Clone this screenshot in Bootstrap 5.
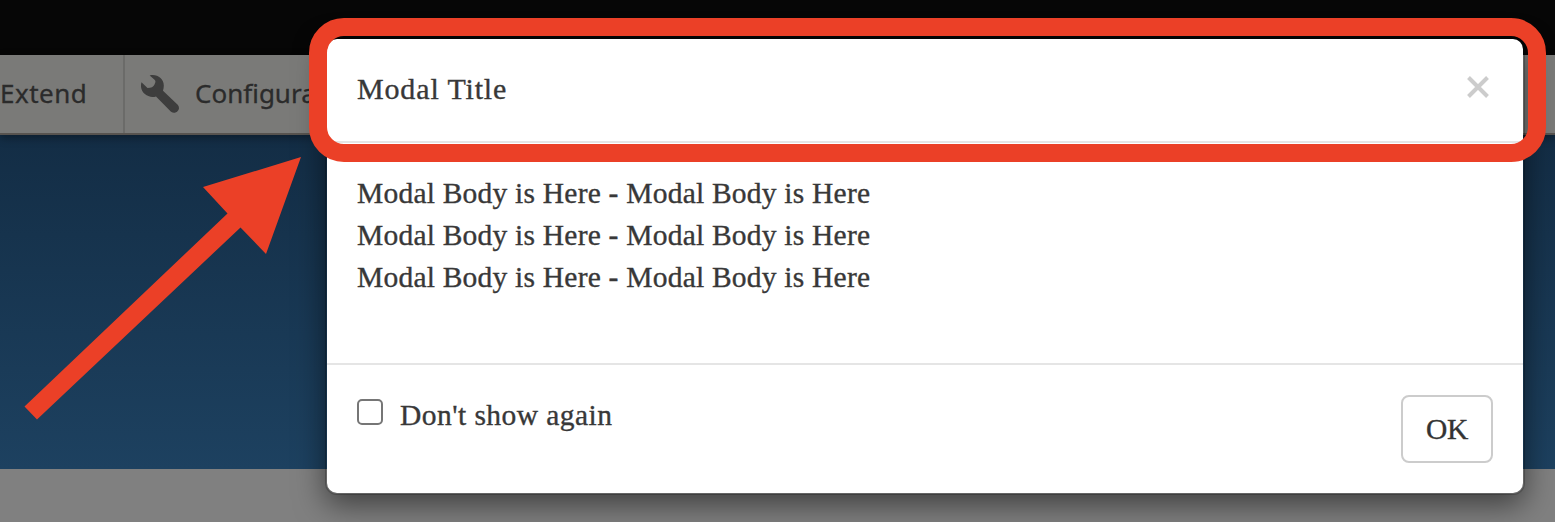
<!DOCTYPE html>
<html lang="en">
<head>
<meta charset="utf-8">
<meta name="viewport" content="width=device-width, initial-scale=1">
<title>Modal Title</title>
<link href="https://cdn.jsdelivr.net/npm/bootstrap@5.3.0/dist/css/bootstrap.min.css" rel="stylesheet">
<style>
  body { height: 522px; background: #808080; }
  .topbar { height: 55px; background: #060606; }
  .tray { height: 80px; background: #7a7a78; border-bottom: 2px solid #57534f; font: 26px/38px "Noto Sans", sans-serif; color: #2b2b2b; -webkit-text-stroke: .3px #2b2b2b; box-shadow: 0 3px 8px rgba(0,0,0,.35); z-index: 1; }
  .tray-item { border-right: 2px solid #6b6b69; width: 125px; letter-spacing: .5px; }
  .tray span, .tray-item { padding-bottom: 3px; }
  .hero { height: 334px; background: linear-gradient(#132d45, #1d4160); }
  .dialog-wrap { padding: 37px 30px 0 325px; z-index: 5; }
  .modal-content { height: 458px; background-color: #fff; border: 2px solid rgba(0,0,0,.2); border-radius: 12px; background-clip: padding-box; box-shadow: 0 10px 30px rgba(0,0,0,.5); font: 29.5px/42px "Liberation Serif", serif; color: #383838; -webkit-text-stroke: .35px #383838; letter-spacing: .22px; }
  .modal-header { height: 104px; padding: 0 30px; border-bottom: 2px solid #e5e5e5; }
  .modal-title { font: inherit; font-size: 30px; letter-spacing: .85px; margin-top: -2px; }
  .modal-body { padding: 29px 30px; }
  .modal-footer { height: 130px; padding: 30px; border-top: 2px solid #e5e5e5; }
  .form-check-input[type=checkbox] { width: 26px; height: 26px; margin: 4px 17px 0 0; border: 2px solid #767676; border-radius: 5px; }
  .again { letter-spacing: .45px; margin-top: -1px; }
  .btn-ok { width: 92px; height: 68px; border: 2px solid #ccc; border-radius: 8px; font: inherit; color: #333; letter-spacing: -.4px; }
  .close-x { width: 22px; height: 22px; margin: -7px 4px 0 0; }
  .ring { left: 309px; top: 18px; width: 1237px; height: 144px; border: 18.5px solid #eb4027; border-radius: 35px; z-index: 7; }
  .arrow { z-index: 6; }
</style>
</head>
<body class="position-relative overflow-hidden">
  <div class="topbar"></div>
  <nav class="tray d-flex position-relative">
    <div class="tray-item d-flex align-items-center">Extend</div>
    <div class="d-flex align-items-center">
      <svg class="ms-3" width="38" height="38" viewBox="0 0 38 38" aria-hidden="true"><path d="M8.700.4C16-1.300 22.800 3.500 22.800 10.500Q22.800 13 22 15.700L36.700 29.800C40.500 34 35 40 30 36.700L15 21.400C7 24-2.500 17 .5 7.300L6.500 13Q12 13 13.500 9.500Q15.500 6 13.300 4.500Z" fill="#3d3d3d"/></svg>
      <span class="ms-3">Configuration</span>
    </div>
  </nav>
  <main class="hero"></main>

  <div class="dialog-wrap position-absolute top-0 start-0 w-100" role="dialog">
    <div class="modal-content">
      <div class="modal-header d-flex align-items-center justify-content-between">
        <h1 class="modal-title">Modal Title</h1>
        <svg class="close-x" viewBox="0 0 22 22" role="button" aria-label="Close"><path d="M1.500 1.500 20.500 20.500M20.500 1.500 1.500 20.500" stroke="#ccc" stroke-width="4"/></svg>
      </div>
      <div class="modal-body">Modal Body is Here - Modal Body is Here<br>Modal Body is Here - Modal Body is Here<br>Modal Body is Here - Modal Body is Here</div>
      <div class="modal-footer d-flex align-items-start justify-content-between">
        <label class="d-flex align-items-start m-0"><input class="form-check-input" type="checkbox"><span class="again">Don't show again</span></label>
        <button class="btn btn-ok p-0 m-0" type="button">OK</button>
      </div>
    </div>
  </div>

  <svg class="arrow position-absolute top-0 start-0" width="310" height="430" aria-hidden="true"><path d="M301 157 203 187 227.500 213.500 24.500 406.500 37 419.500 240.500 227.500 266 254Z" fill="#eb4027"/></svg>
  <div class="ring position-absolute"></div>
<script src="https://cdn.jsdelivr.net/npm/bootstrap@5.3.0/dist/js/bootstrap.bundle.min.js"></script>
</body>
</html>
